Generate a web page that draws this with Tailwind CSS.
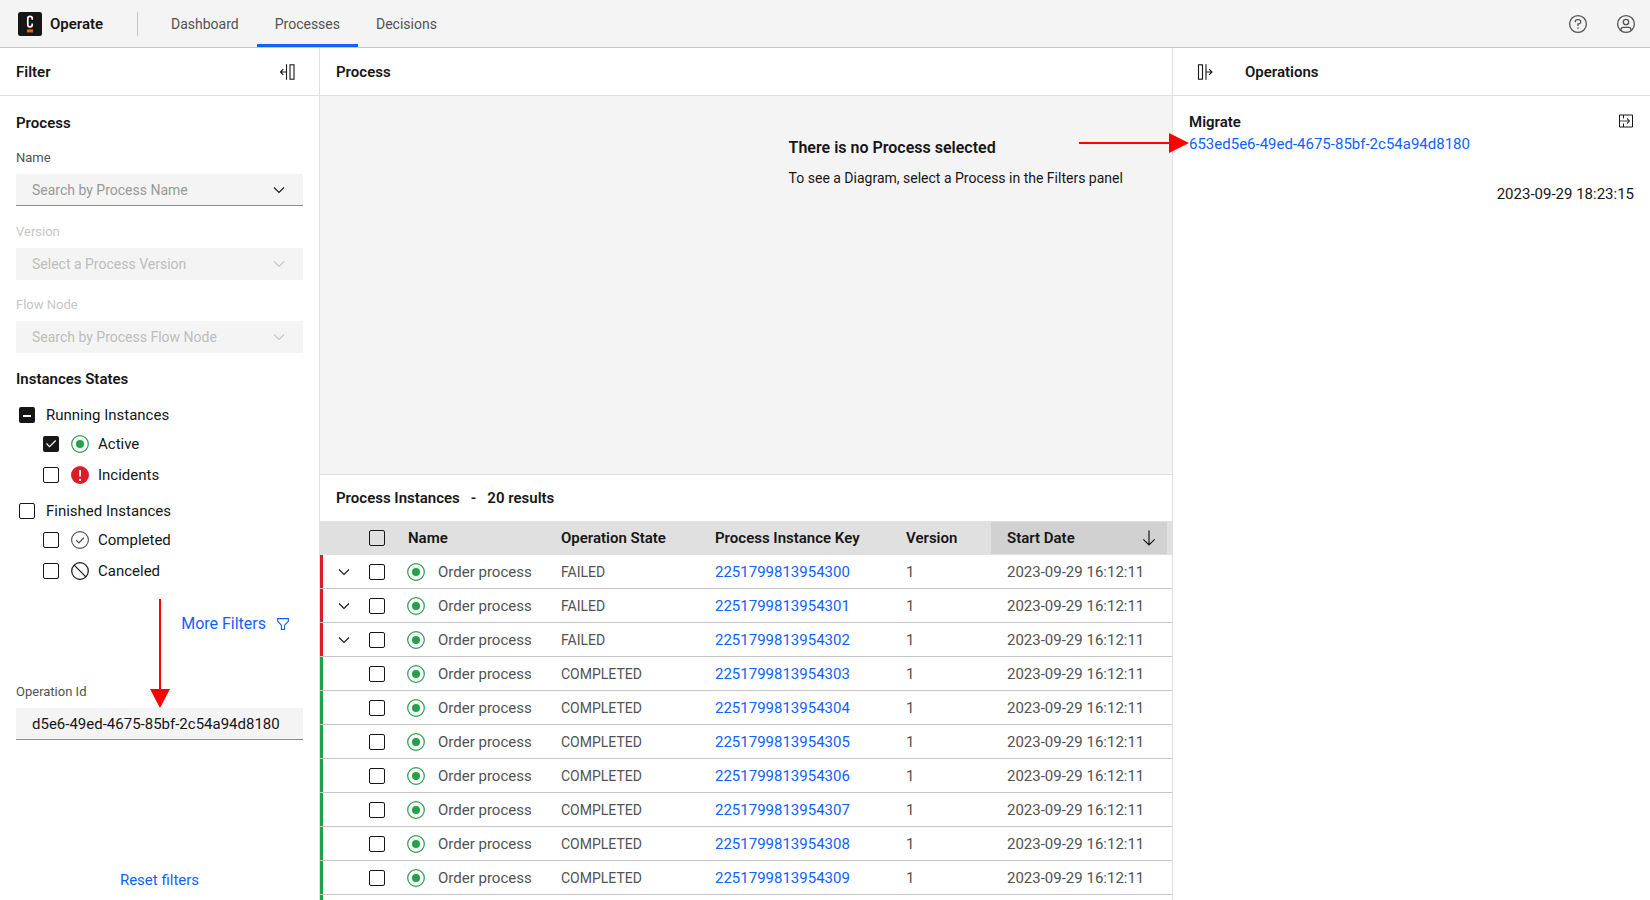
<!DOCTYPE html>
<html lang="en">
<head>
<meta charset="utf-8">
<title>Operate</title>
<script src="https://cdn.jsdelivr.net/npm/@tailwindcss/browser@4"></script>
</head>
<body class="h-screen flex flex-col overflow-hidden bg-white font-['Roboto',sans-serif] text-[15px] leading-5 text-[#161616]">

<svg class="hidden">
  <symbol id="chevron" viewBox="0 0 16 16"><path d="M3 5.500 8 10.500 13 5.500" fill="none" stroke="currentColor" stroke-width="1.100"/></symbol>
  <symbol id="active" viewBox="0 0 18 18"><circle cx="9" cy="9" r="8.300" fill="none" stroke="#24a148" stroke-width="1.200"/><circle cx="9" cy="9" r="4" fill="#24a148"/></symbol>
</svg>

<header class="h-12 shrink-0 flex items-center justify-between bg-[#f4f4f4] border-b border-[#c6c6c6] pl-[18px] pr-[14px]">
  <div class="flex items-center h-full">
    <a href="#" class="flex items-center gap-2 w-[119px] font-semibold">
      <svg class="size-6 shrink-0" viewBox="0 0 24 24"><rect width="24" height="24" rx="2.500" fill="#161616"/><path d="M14.200 7.800V6.300Q14.200 4.400 12 4.400T9.800 6.300v6.600Q9.800 14.800 12 14.800t2.200-1.900V11.400" fill="none" stroke="#fff" stroke-width="1.700"/><rect x="9" y="17.400" width="6" height="3" fill="#fc5d0d"/></svg>
      Operate</a>
    <span class="w-px h-6 bg-[#c6c6c6]"></span>
    <nav class="flex h-full ml-[15px] text-sm text-[#525252]">
      <a href="#" class="flex items-center h-full px-[18px]">Dashboard</a>
      <a href="#" aria-current="page" class="flex items-center h-full px-[18px] pt-[3px] border-b-3 border-[#0f62fe]">Processes</a>
      <a href="#" class="flex items-center h-full px-[18px]">Decisions</a>
    </nav>
  </div>
  <div class="flex items-center gap-7 text-[#525252]">
    <button aria-label="Help"><svg class="size-5" viewBox="0 0 20 20" fill="none" stroke="currentColor" stroke-width="1.300"><circle cx="10" cy="10" r="8.400"/><path d="M7.300 8.200V7.800Q7.300 5.700 9.400 5.700h1Q12.700 5.700 12.700 7.800T10.500 9.900H10v2"/><circle cx="10" cy="14" r=".85" fill="currentColor" stroke="none"/></svg></button>
    <button aria-label="Account"><svg class="size-5" viewBox="0 0 20 20" fill="none" stroke="currentColor" stroke-width="1.300"><circle cx="10" cy="10" r="8.400"/><circle cx="10" cy="8" r="2.700"/><path d="M5 16.500V15.600Q5 13.300 7.300 13.300h5.400Q15 13.300 15 15.600v.9"/></svg></button>
  </div>
</header>

<div class="flex flex-1 min-h-0">
  <aside class="w-80 shrink-0 flex flex-col border-r border-[#e0e0e0]">
    <div class="h-12 shrink-0 flex items-center justify-between border-b border-[#e0e0e0] pl-4 pr-6">
      <h2 class="font-semibold">Filter</h2>
      <button aria-label="Collapse filters"><svg class="size-4" viewBox="0 0 16 16" fill="none" stroke="currentColor" stroke-width="1.100"><path d="M7.500.3V15.700M7.500 8H1.800M4.300 5.200 1.500 8l2.800 2.800"/><rect x="11" y=".8" width="4" height="14.400"/></svg></button>
    </div>
    <form class="relative flex-1 flex flex-col px-4 pt-[17px] pb-2.5">
      <h3 class="font-semibold">Process</h3>
      <label for="name" class="mt-[15px] mb-1.5 text-[13px] leading-5 text-[#525252]">Name</label>
      <div class="relative">
        <select id="name" class="block w-full h-8 pl-4 pr-10 appearance-none bg-[#f4f4f4] border-b border-[#8d8d8d] text-sm text-[#999999]"><option>Search by Process Name</option></select>
        <svg class="absolute right-4 top-2 size-4 pointer-events-none"><use href="#chevron"/></svg>
      </div>
      <label for="version" class="mt-4 mb-1.5 text-[13px] leading-5 text-[#c6c6c6]">Version</label>
      <div class="relative">
        <select id="version" disabled class="block w-full h-8 pl-4 pr-10 appearance-none bg-[#f4f4f4] text-sm text-[#bdbdbd] opacity-100"><option>Select a Process Version</option></select>
        <svg class="absolute right-4 top-2 size-4 pointer-events-none text-[#c6c6c6]"><use href="#chevron"/></svg>
      </div>
      <label for="node" class="mt-[15px] mb-1.5 text-[13px] leading-5 text-[#c6c6c6]">Flow Node</label>
      <div class="relative">
        <select id="node" disabled class="block w-full h-8 pl-4 pr-10 appearance-none bg-[#f4f4f4] text-sm text-[#bdbdbd] opacity-100"><option>Search by Process Flow Node</option></select>
        <svg class="absolute right-4 top-2 size-4 pointer-events-none text-[#c6c6c6]"><use href="#chevron"/></svg>
      </div>
      <h3 class="mt-4 font-semibold">Instances States</h3>
      <div class="mt-4 flex flex-col pl-[3px]">
        <label class="flex items-center gap-[11px] h-5">
          <span class="relative flex size-4"><input type="checkbox" checked class="size-4 appearance-none rounded-xs bg-[#161616]"><svg class="absolute inset-0 size-4 pointer-events-none" viewBox="0 0 16 16"><rect x="4" y="8" width="8" height="2" fill="#fff"/></svg></span>
          Running Instances</label>
        <label class="flex items-center h-5 mt-[9px] ml-6">
          <span class="relative flex size-4 mr-3"><input type="checkbox" checked class="size-4 appearance-none rounded-xs bg-[#161616]"><svg class="absolute inset-0 size-4 pointer-events-none" viewBox="0 0 16 16"><path d="M3.500 7.500 6.500 10.700 12.700 4.500" fill="none" stroke="#fff" stroke-width="1.100"/></svg></span>
          <svg class="size-[18px] mr-[9px]"><use href="#active"/></svg>Active</label>
        <label class="flex items-center h-5 mt-[11px] ml-6">
          <input type="checkbox" class="size-4 mr-3 appearance-none rounded-xs border border-[#161616]">
          <svg class="size-[18px] mr-[9px]" viewBox="0 0 18 18"><circle cx="9" cy="9" r="9" fill="#da1e28"/><path d="M8.200 4h1.700v6.600H8.200z" fill="#fff"/><circle cx="9.050" cy="13.900" r="1.100" fill="#fff"/></svg>Incidents</label>
        <label class="flex items-center gap-[11px] h-5 mt-4">
          <input type="checkbox" class="size-4 appearance-none rounded-xs border border-[#161616]">
          Finished Instances</label>
        <label class="flex items-center h-5 mt-[9px] ml-6">
          <input type="checkbox" class="size-4 mr-3 appearance-none rounded-xs border border-[#161616]">
          <svg class="size-[18px] mr-[9px]" viewBox="0 0 18 18" fill="none" stroke="#525252"><circle cx="9" cy="9" r="8.400" stroke-width="1.100"/><path d="M5.200 9.200 7.900 11.900 12.800 6.700" stroke-width="1.300"/></svg>Completed</label>
        <label class="flex items-center h-5 mt-[11px] ml-6">
          <input type="checkbox" class="size-4 mr-3 appearance-none rounded-xs border border-[#161616]">
          <svg class="size-[18px] mr-[9px]" viewBox="0 0 18 18" fill="none" stroke="#161616" stroke-width="1.200"><circle cx="9" cy="9" r="8.300"/><path d="M3.100 3.100 14.900 14.900"/></svg>Canceled</label>
      </div>
      <button type="button" class="self-end mt-[33px] mr-[14px] flex items-center gap-[11px] text-base leading-5 text-[#0f62fe]">More Filters
        <svg class="size-3" viewBox="0 0 12 12" fill="none" stroke="currentColor" stroke-width="1.100"><path d="M.6.600h10.800v2.600L7.600 7.200v4.200H4.400V7.200L.6 3.200z"/></svg></button>
      <label for="opid" class="mt-12 mb-1.5 text-[13px] leading-5 text-[#525252]">Operation Id</label>
      <input id="opid" type="text" value="d5e6-49ed-4675-85bf-2c54a94d8180" class="w-full h-8 px-4 bg-[#f4f4f4] border-b border-[#8d8d8d]">
      <button type="reset" class="self-center mt-auto text-[#0f62fe]">Reset filters</button>
      <svg class="absolute left-[150px] top-[503px] w-5 h-[109px] pointer-events-none" viewBox="0 0 20 109" fill="#f00"><path d="M9 0h2v90h9L10 109 0 90h9z"/></svg>
    </form>
  </aside>

  <main class="flex-1 min-w-0 flex flex-col">
    <div class="h-12 shrink-0 flex items-center border-b border-[#e0e0e0] px-4"><h1 class="font-semibold">Process</h1></div>
    <section class="h-[379px] shrink-0 bg-[#f4f4f4] border-b border-[#e0e0e0] pl-[55%] pt-[42px] whitespace-nowrap">
      <h2 class="text-base leading-5 font-semibold">There is no Process selected</h2>
      <p class="mt-2.5 text-sm leading-5">To see a Diagram, select a Process in the Filters panel</p>
    </section>
    <section class="flex-1 min-h-0 flex flex-col overflow-hidden">
      <h2 class="h-[46px] shrink-0 flex items-center gap-[11px] px-4 font-semibold"><span>Process Instances</span><span>-</span><span>20 results</span></h2>
      <table class="w-full table-fixed border-separate border-spacing-0 text-left">
        <colgroup><col class="w-[49px]"><col class="w-[23px]"><col class="w-[153px]"><col class="w-[154px]"><col class="w-[191px]"><col class="w-[101px]"><col class="w-[181px]"></colgroup>
        <thead class="bg-[#e0e0e0]">
          <tr class="h-[34px]">
            <th class="p-0"></th>
            <th class="p-0"><input type="checkbox" aria-label="Select all" class="block size-4 appearance-none rounded-xs border border-[#161616]"></th>
            <th class="py-0 px-4 font-semibold">Name</th>
            <th class="py-0 px-4 font-semibold">Operation State</th>
            <th class="py-0 px-4 font-semibold">Process Instance Key</th>
            <th class="py-0 px-4 font-semibold">Version</th>
            <th class="py-0 pl-0 pr-[5px] font-semibold"><button class="flex w-full h-8 items-center justify-between pl-4 pr-2.5 bg-[#d1d1d1]">Start Date
              <svg class="size-4" viewBox="0 0 16 16" fill="none" stroke="currentColor" stroke-width="1.200"><path d="M8 .5V15M2.300 9.300 8 15 13.700 9.300"/></svg></button></th>
          </tr>
        </thead>
        <tbody id="rows" class="text-[#525252] [&_td]:h-[34px] [&_td]:border-b [&_td]:border-[#c6c6c6]"></tbody>
      </table>
      <div class="h-8 border-l-3 border-[#24a148]"></div>
    </section>
  </main>

  <aside class="w-[478px] shrink-0 border-l border-[#e0e0e0]">
    <div class="h-12 flex items-center gap-8 border-b border-[#e0e0e0] pl-6">
      <button aria-label="Collapse operations"><svg class="size-4" viewBox="0 0 16 16" fill="none" stroke="currentColor" stroke-width="1.100"><path d="M9 .3V15.700M9 8h5.700M12.200 5.200 15 8l-2.800 2.800"/><rect x="1.500" y=".8" width="4" height="14.400"/></svg></button>
      <h2 class="font-semibold">Operations</h2>
    </div>
    <div class="relative pl-4 pr-4 pt-4">
      <div class="flex items-center justify-between"><h3 class="font-semibold">Migrate</h3>
        <svg class="size-4 mb-0.5" viewBox="0 0 16 16" fill="none" stroke="currentColor" stroke-width="1"><path d="M1.500 2h13v12h-13zM5.500 2v3.500M5.500 10.500V14"/><path d="M2 8h9.500M9 5.500 11.500 8 9 10.500" stroke-width="1.100" opacity=".8"/></svg></div>
      <a href="#" class="block mt-0.5 text-[#0f62fe]">653ed5e6-49ed-4675-85bf-2c54a94d8180</a>
      <p class="mt-[30px] text-right">2023-09-29 18:23:15</p>
      <svg class="absolute -left-[94px] top-[37px] w-[110px] h-5 pointer-events-none" viewBox="0 0 110 20" fill="#f00"><path d="M0 9v2h90v9L110 10 90 0v9z"/></svg>
    </div>
  </aside>
</div>

<script>
const rows = Array.from({ length: 10 }, (_, i) => ({ key: '22517998139543' + String(i).padStart(2, '0'), failed: i < 3 }));
document.getElementById('rows').innerHTML = rows.map(r => `
  <tr>
    <td class="p-0"><div class="flex items-center h-[33px] border-l-3 pl-[13px] ${r.failed ? 'border-[#da1e28]' : 'border-[#24a148]'}">${r.failed ? '<button aria-label="Expand row" class="text-[#161616]"><svg class="size-4"><use href="#chevron"/></svg></button>' : ''}</div></td>
    <td class="p-0"><input type="checkbox" aria-label="Select ${r.key}" class="block size-4 appearance-none rounded-xs border border-[#161616]"></td>
    <td class="py-0 pl-[15px] pr-0"><div class="flex items-center gap-[13px] whitespace-nowrap"><svg class="size-[18px] shrink-0"><use href="#active"/></svg>Order process</div></td>
    <td class="py-0 px-4 text-sm">${r.failed ? 'FAILED' : 'COMPLETED'}</td>
    <td class="py-0 px-4"><a href="#" class="text-[#0f62fe]">${r.key}</a></td>
    <td class="py-0 px-4">1</td>
    <td class="py-0 px-4 whitespace-nowrap">2023-09-29 16:12:11</td>
  </tr>`).join('');
</script>
</body>
</html>
